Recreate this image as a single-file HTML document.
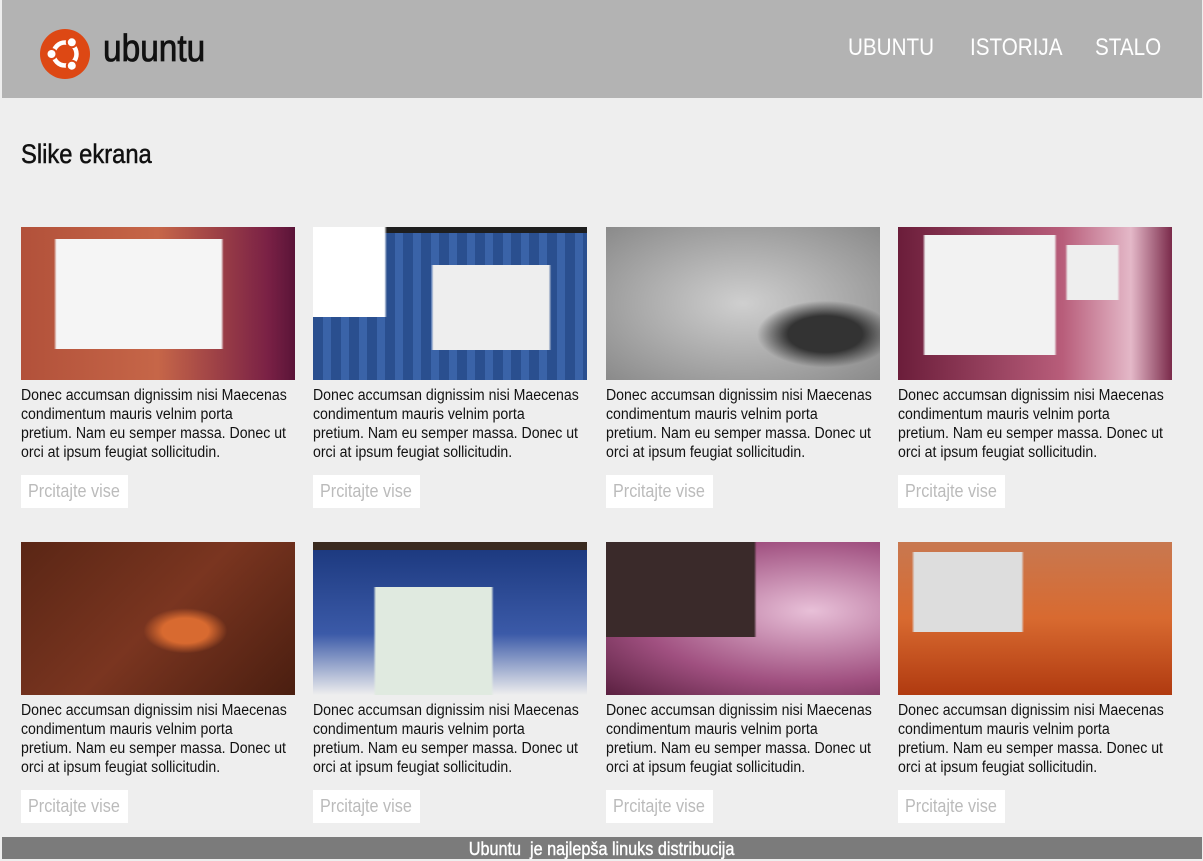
<!DOCTYPE html>
<html><head><meta charset="utf-8"><style>
*{margin:0;padding:0;box-sizing:border-box}
body{width:1203px;height:859px;background:#eee;font-family:"Liberation Sans",sans-serif;position:relative;overflow:hidden}
.hdr{position:absolute;left:2px;top:0;width:1200px;height:98px;background:#b3b3b3}
.logo{position:absolute;left:38px;top:29px}
.brand{position:absolute;left:101px;top:28px;font-size:38px;color:#111;transform:scaleX(.88);transform-origin:left;-webkit-text-stroke:0.8px #111}
.nav{position:absolute;top:34px;font-size:24px;color:#fff;transform:scaleX(.86);transform-origin:left}
h1{position:absolute;left:21px;top:139px;font-size:27px;color:#111;transform:scaleX(.88);transform-origin:left;font-weight:normal;-webkit-text-stroke:0.5px #111}
.card{position:absolute;width:274px}
.img{width:274px;height:153px}
.txt{margin-top:6px;font-size:15.5px;line-height:19px;color:#111;white-space:nowrap;transform:scaleX(.91);transform-origin:left;width:310px}
.btn{position:absolute;left:0;width:107px;height:33px;background:#fff;color:#bbb;font-size:18px;line-height:33px;padding-left:7px;white-space:nowrap}
.btn span{display:inline-block;transform:scaleX(.9);transform-origin:left}
.ftr{position:absolute;left:2px;top:837px;width:1200px;height:22px;background:#7b7b7b;color:#fff;text-align:center;font-size:18px;line-height:24px}
.ftr span{display:inline-block;transform:scaleX(.9);-webkit-text-stroke:0.4px #fff}
</style></head><body>
<div class="hdr">
<svg class="logo" width="50" height="50" viewBox="0 0 50 50"><circle cx="25" cy="25" r="25" fill="#dd4814"/><circle cx="25" cy="25" r="11.5" fill="none" stroke="#fff" stroke-width="4.5"/><circle cx="11.5" cy="25" r="6" fill="#dd4814"/><circle cx="31.8" cy="13.3" r="6" fill="#dd4814"/><circle cx="31.8" cy="36.7" r="6" fill="#dd4814"/><circle cx="11.5" cy="25" r="4" fill="#fff"/><circle cx="31.8" cy="13.3" r="4" fill="#fff"/><circle cx="31.8" cy="36.7" r="4" fill="#fff"/></svg>
<div class="brand">ubuntu</div>
<div class="nav" style="left:846px">UBUNTU</div>
<div class="nav" style="left:968px">ISTORIJA</div>
<div class="nav" style="left:1093px">STALO</div>
</div>
<h1>Slike ekrana</h1>

<div class="card" style="left:21px;top:227px"><div class="img" style="background:linear-gradient(90deg,transparent 12%,#f5f5f5 13%,#f5f5f5 73%,transparent 74%) 0 12px/100% 110px no-repeat,linear-gradient(90deg,#b2513a,#c66648 50%,#7a2145 90%,#5a1438)"></div><div class="txt">Donec accumsan dignissim nisi Maecenas<br>condimentum mauris velnim porta<br>pretium. Nam eu semper massa. Donec ut<br>orci at ipsum feugiat sollicitudin.</div><div class="btn" style="top:248px"><span>Prcitajte vise</span></div></div>
<div class="card" style="left:313px;top:227px"><div class="img" style="background:linear-gradient(90deg,transparent 43%,#eee 44%,#eee 86%,transparent 87%) 0 38px/100% 85px no-repeat,linear-gradient(90deg,#fff 0 26%,transparent 27%) 0 0/100% 90px no-repeat,linear-gradient(180deg,#1e1e1e 0 6px,transparent 6px),repeating-linear-gradient(90deg,#2a4f8f 0 10px,#3a63a8 10px 18px)"></div><div class="txt">Donec accumsan dignissim nisi Maecenas<br>condimentum mauris velnim porta<br>pretium. Nam eu semper massa. Donec ut<br>orci at ipsum feugiat sollicitudin.</div><div class="btn" style="top:248px"><span>Prcitajte vise</span></div></div>
<div class="card" style="left:606px;top:227px"><div class="img" style="background:radial-gradient(ellipse at 80% 70%,#333 0 12%,transparent 22%),radial-gradient(ellipse at 50% 50%,#cfcfcf,#8a8a8a)"></div><div class="txt">Donec accumsan dignissim nisi Maecenas<br>condimentum mauris velnim porta<br>pretium. Nam eu semper massa. Donec ut<br>orci at ipsum feugiat sollicitudin.</div><div class="btn" style="top:248px"><span>Prcitajte vise</span></div></div>
<div class="card" style="left:898px;top:227px"><div class="img" style="background:linear-gradient(90deg,transparent 9%,#f2f2f2 10%,#f2f2f2 57%,transparent 58%) 0 8px/100% 120px no-repeat,linear-gradient(90deg,transparent 61%,#eee 62%,#eee 80%,transparent 81%) 0 18px/100% 55px no-repeat,linear-gradient(90deg,#6b1d3a,#b85d7a 60%,#e4b8c8 85%,#7a2a4a)"></div><div class="txt">Donec accumsan dignissim nisi Maecenas<br>condimentum mauris velnim porta<br>pretium. Nam eu semper massa. Donec ut<br>orci at ipsum feugiat sollicitudin.</div><div class="btn" style="top:248px"><span>Prcitajte vise</span></div></div>

<div class="card" style="left:21px;top:542px"><div class="img" style="background:radial-gradient(ellipse at 60% 58%,#d86a30 0 10%,transparent 18%),linear-gradient(135deg,#5a2615,#7a3520 50%,#4a1e10)"></div><div class="txt">Donec accumsan dignissim nisi Maecenas<br>condimentum mauris velnim porta<br>pretium. Nam eu semper massa. Donec ut<br>orci at ipsum feugiat sollicitudin.</div><div class="btn" style="top:248px"><span>Prcitajte vise</span></div></div>
<div class="card" style="left:313px;top:542px"><div class="img" style="background:linear-gradient(90deg,transparent 22%,#e0eae0 23%,#e0eae0 65%,transparent 66%) 0 45px/100% 108px no-repeat,linear-gradient(180deg,#3a2a20 0 8px,#1d3a80 8px,#3b5aa8 60%,#eee)"></div><div class="txt">Donec accumsan dignissim nisi Maecenas<br>condimentum mauris velnim porta<br>pretium. Nam eu semper massa. Donec ut<br>orci at ipsum feugiat sollicitudin.</div><div class="btn" style="top:248px"><span>Prcitajte vise</span></div></div>
<div class="card" style="left:606px;top:542px"><div class="img" style="background:linear-gradient(90deg,#3a2a2a 0 54%,transparent 55%) 0 0/100% 95px no-repeat,radial-gradient(ellipse at 75% 45%,#e8c0d8,#a05080 60%,#5a2040)"></div><div class="txt">Donec accumsan dignissim nisi Maecenas<br>condimentum mauris velnim porta<br>pretium. Nam eu semper massa. Donec ut<br>orci at ipsum feugiat sollicitudin.</div><div class="btn" style="top:248px"><span>Prcitajte vise</span></div></div>
<div class="card" style="left:898px;top:542px"><div class="img" style="background:linear-gradient(90deg,transparent 5%,#ddd 6%,#ddd 45%,transparent 46%) 0 10px/100% 80px no-repeat,linear-gradient(180deg,#c87850,#d86a30 50%,#b03a10)"></div><div class="txt">Donec accumsan dignissim nisi Maecenas<br>condimentum mauris velnim porta<br>pretium. Nam eu semper massa. Donec ut<br>orci at ipsum feugiat sollicitudin.</div><div class="btn" style="top:248px"><span>Prcitajte vise</span></div></div>

<div class="ftr"><span>Ubuntu &nbsp;je najlepša linuks distribucija</span></div>
</body></html>
